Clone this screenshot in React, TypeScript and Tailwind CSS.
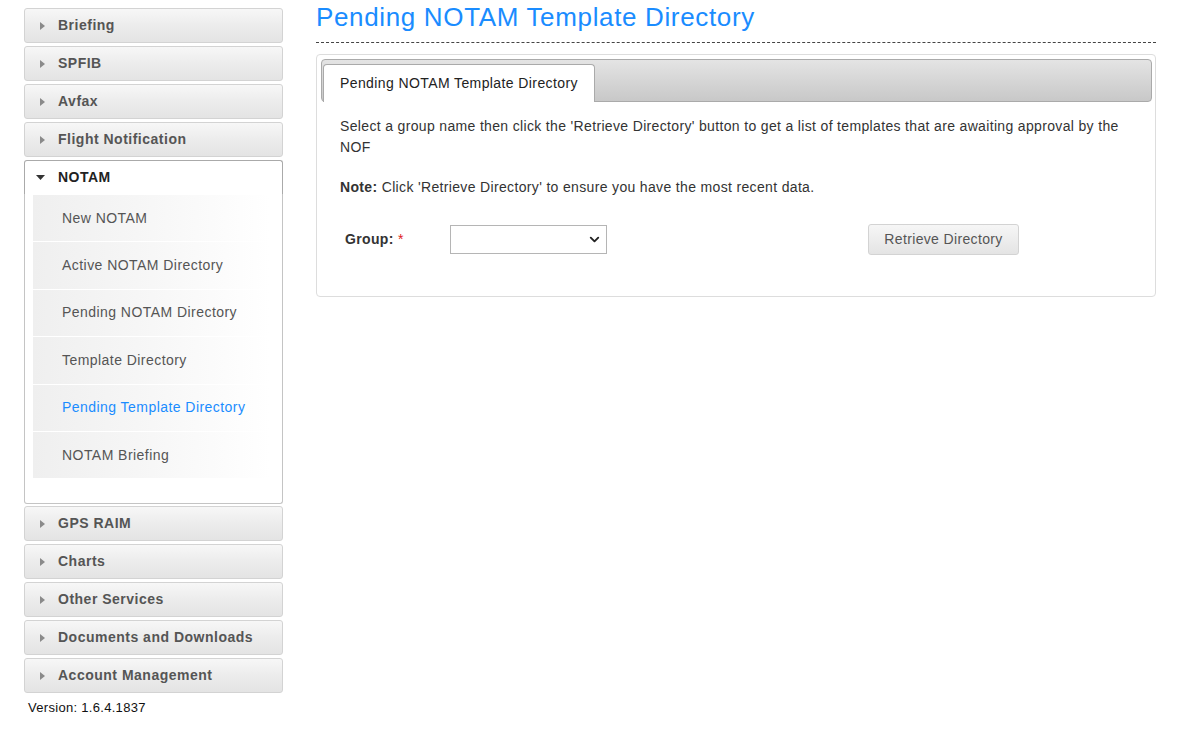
import { ChevronDown } from "lucide-react";

const TOP_SECTIONS = ["Briefing", "SPFIB", "Avfax", "Flight Notification"];
const BOTTOM_SECTIONS = [
  "GPS RAIM",
  "Charts",
  "Other Services",
  "Documents and Downloads",
  "Account Management",
];

const NOTAM_LINKS = [
  "New NOTAM",
  "Active NOTAM Directory",
  "Pending NOTAM Directory",
  "Template Directory",
  "Pending Template Directory",
  "NOTAM Briefing",
];

const ACTIVE_LINK = "Pending Template Directory";

function TriangleRight() {
  return (
    <svg width="5" height="8" viewBox="0 0 5 8" aria-hidden="true">
      <polygon points="0,0 5,4 0,8" fill="#8a8a8a" />
    </svg>
  );
}

function TriangleDown() {
  return (
    <svg width="9" height="5" viewBox="0 0 9 5" aria-hidden="true">
      <polygon points="0,0 9,0 4.5,5" fill="#333333" />
    </svg>
  );
}

function SectionHeader({ label }: { label: string }) {
  return (
    <div className="mb-[3px] flex h-[35px] items-center rounded-[3px] border border-[#d3d3d3] bg-gradient-to-b from-[#f7f7f7] via-[#ececec] to-[#e4e4e4] pl-[15px]">
      <span className="flex w-[18px] items-center">
        <TriangleRight />
      </span>
      <span className="text-[14px] font-bold tracking-[0.5px] text-[#555555]">{label}</span>
    </div>
  );
}

function NotamSection() {
  return (
    <div className="mb-[2px]">
      <div className="flex h-[34px] items-center rounded-t-[3px] border border-b-0 border-[#aaaaaa] bg-white pl-[11px]">
        <span className="flex w-[22px] items-center">
          <TriangleDown />
        </span>
        <span className="text-[14px] font-bold tracking-[0.5px] text-[#222222]">NOTAM</span>
      </div>
      <div className="rounded-b-[3px] border border-t-0 border-[#c4c4c4] bg-white pb-[24px] pl-[8px] pr-[12px] pt-[1px]">
        {NOTAM_LINKS.map((link) => (
          <div
            key={link}
            className="mb-px flex h-[46.4px] items-center bg-gradient-to-r from-[#efefef] to-white pl-[29px]"
          >
            <span
              className={
                link === ACTIVE_LINK
                  ? "text-[14px] tracking-[0.45px] text-[#1a8cff]"
                  : "text-[14px] tracking-[0.45px] text-[#555555]"
              }
            >
              {link}
            </span>
          </div>
        ))}
      </div>
    </div>
  );
}

export default function App() {
  return (
    <div className="flex min-h-[732px] bg-white pl-[24px] pt-[8px] font-['Liberation_Sans',Arial,sans-serif]">
      <aside className="w-[259px] shrink-0">
        {TOP_SECTIONS.map((s) => (
          <SectionHeader key={s} label={s} />
        ))}
        <NotamSection />
        {BOTTOM_SECTIONS.map((s) => (
          <SectionHeader key={s} label={s} />
        ))}
        <p className="mt-[5px] pl-[4px] text-[13px] tracking-[0.3px] text-[#111111]">
          Version: 1.6.4.1837
        </p>
      </aside>

      <main className="ml-[33px] -mt-[8px] w-[840px]">
        <h1 className="pt-[1px] text-[26px] leading-[32px] tracking-[0.65px] text-[#1a8cff]">
          Pending NOTAM Template Directory
        </h1>
        <div className="mt-[9px] border-t border-dashed border-[#444444]" />

        <section className="mt-[11px] rounded-[4px] border border-[#dddddd] pl-[4px] pr-[3px] pt-[4px]">
          <div className="flex h-[43px] items-end rounded-[4px] border border-[#aaaaaa] bg-gradient-to-b from-[#e4e4e4] to-[#c8c8c8] pl-[1px]">
            <div className="-mb-px flex h-[38px] items-center rounded-t-[4px] border border-b-0 border-[#aaaaaa] bg-white px-[16px] text-[14px] tracking-[0.4px] text-[#222222]">
              Pending NOTAM Template Directory
            </div>
          </div>

          <div className="pb-[41px] pl-[19px] pr-[20px] pt-[14px] text-[14px] leading-[21px] tracking-[0.34px] text-[#333333]">
            <p>
              Select a group name then click the 'Retrieve Directory' button to get a list of
              templates that are awaiting approval by the NOF
            </p>
            <p className="mt-[19px]">
              <span className="font-bold">Note:</span> Click 'Retrieve Directory' to ensure you
              have the most recent data.
            </p>

            <div className="mt-[26px] flex items-center">
              <label className="w-[110px] pl-[5px] font-bold text-[#333333]">
                Group: <span className="font-normal text-[#e02020]">*</span>
              </label>
              <div className="flex h-[29px] w-[157px] items-center justify-end border border-[#b5b5b5] bg-white pr-[4px]">
                <ChevronDown size={15} strokeWidth={3} color="#222222" />
              </div>
              <button
                type="button"
                className="ml-[261px] h-[31px] w-[151px] rounded-[3px] border border-[#d3d3d3] bg-gradient-to-b from-[#f6f6f6] to-[#e4e4e4] text-[14px] tracking-[0.35px] text-[#555555]"
              >
                Retrieve Directory
              </button>
            </div>
          </div>
        </section>
      </main>
    </div>
  );
}
